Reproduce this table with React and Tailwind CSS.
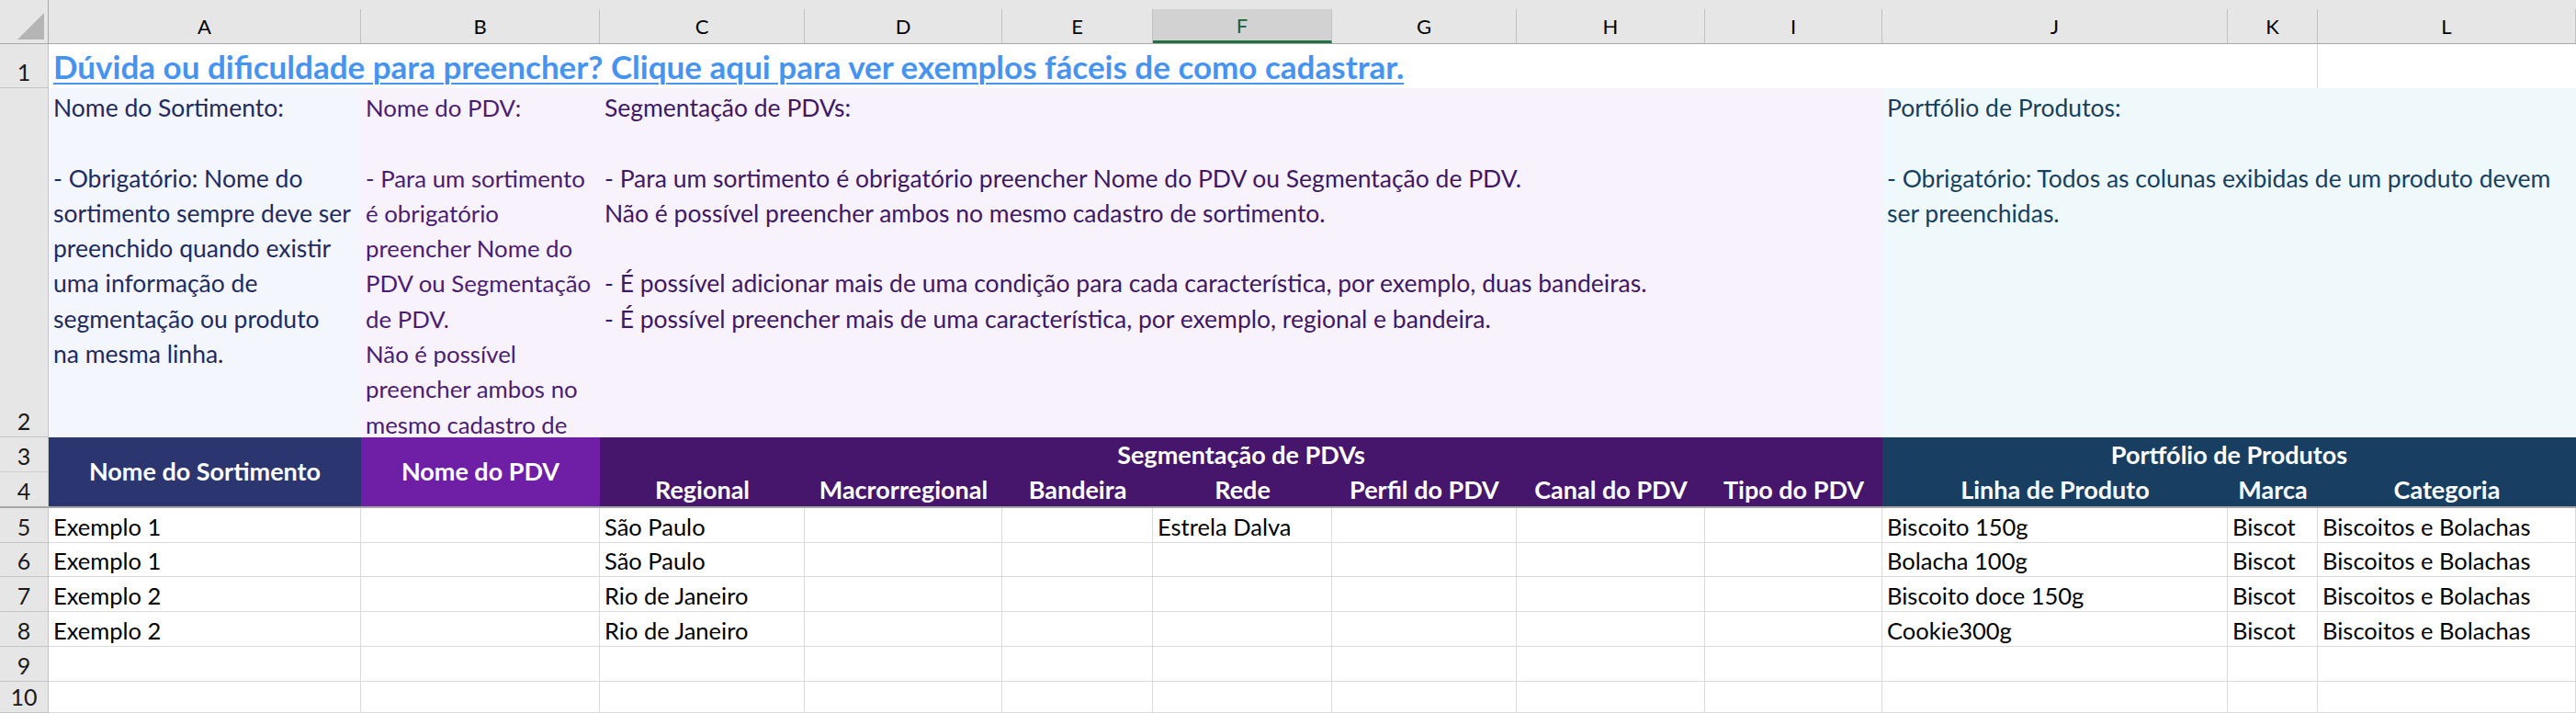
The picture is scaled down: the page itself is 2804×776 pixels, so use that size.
import React from 'react'

const columns = [
  { key: 'A' }, { key: 'B' }, { key: 'C' }, { key: 'D' }, { key: 'E' }, { key: 'F', selected: true },
  { key: 'G' }, { key: 'H' }, { key: 'I' }, { key: 'J' }, { key: 'K' }, { key: 'L' }
]

const segmentFields = ['Regional', 'Macrorregional', 'Bandeira', 'Rede', 'Perfil do PDV', 'Canal do PDV', 'Tipo do PDV']
const productFields = ['Linha de Produto', 'Marca', 'Categoria']

// one entry per data row, keyed by column letter
const rows = [
  { n: 5, A: 'Exemplo 1', C: 'São Paulo', F: 'Estrela Dalva', J: 'Biscoito 150g', K: 'Biscot', L: 'Biscoitos e Bolachas' },
  { n: 6, A: 'Exemplo 1', C: 'São Paulo', J: 'Bolacha 100g', K: 'Biscot', L: 'Biscoitos e Bolachas' },
  { n: 7, A: 'Exemplo 2', C: 'Rio de Janeiro', J: 'Biscoito doce 150g', K: 'Biscot', L: 'Biscoitos e Bolachas' },
  { n: 8, A: 'Exemplo 2', C: 'Rio de Janeiro', J: 'Cookie300g', K: 'Biscot', L: 'Biscoitos e Bolachas' },
  { n: 9 },
  { n: 10 }
]

const notesA = [
  'Nome do Sortimento:', '', '- Obrigatório: Nome do', 'sortimento sempre deve ser', 'preenchido quando existir',
  'uma informação de', 'segmentação ou produto', 'na mesma linha.'
]
const notesB = [
  'Nome do PDV:', '', '- Para um sortimento', 'é obrigatório', 'preencher Nome do', 'PDV ou Segmentação',
  'de PDV.', 'Não é possível', 'preencher ambos no', 'mesmo cadastro de'
]
const notesC = [
  'Segmentação de PDVs:', '',
  '- Para um sortimento é obrigatório preencher Nome do PDV ou Segmentação de PDV.',
  'Não é possível preencher ambos no mesmo cadastro de sortimento.', '',
  '- É possível adicionar mais de uma condição para cada característica, por exemplo, duas bandeiras.',
  '- É possível preencher mais de uma característica, por exemplo, regional e bandeira.'
]
const notesJ = [
  'Portfólio de Produtos:', '', '- Obrigatório: Todos as colunas exibidas de um produto devem', 'ser preenchidas.'
]

function RowNumber({ n, className = '' }) {
  return (
    <div className={`bg-[#e6e6e6] border-r border-b border-[#c4c4c4] flex items-end justify-center leading-[34px] text-[25px] text-[#1a1a1a] ${className}`}>
      {n}
    </div>
  )
}

function Notes({ lines, className }) {
  return (
    <div className={`overflow-hidden pt-[2px] pl-[5px] leading-[38.3px] ${className}`}>
      {lines.map((line, i) => (
        <div key={i} className="whitespace-nowrap h-[38.3px]">{line}</div>
      ))}
    </div>
  )
}

export default function App() {
  return (
    <div className="w-[2804px] h-[776px] overflow-hidden bg-white font-[family-name:Lato,sans-serif] text-black">
      <div className="grid grid-cols-[53px_340px_260px_223px_215px_164px_195px_201px_205px_193px_376px_98px_281px] grid-rows-[48px_48px_380px_38px_39px_38px_37px_38px_38px_38px_34px] h-full">
        {/* column letters */}
        <div className="bg-[#e6e6e6] border-r border-b border-[#a8a8a8] flex items-end justify-end pr-[4px] pb-[4px]">
          <svg width="29" height="29" viewBox="0 0 29 29">
            <polygon points="29,0 29,29 0,29" fill="#b5b5b5" />
          </svg>
        </div>
        {columns.map((col) => (
          <div key={col.key} className="bg-[#e6e6e6] border-b border-[#a8a8a8] flex items-end">
            {col.selected ? (
              <div className="h-[37px] w-full bg-[#d2d2d2] border-r border-b-[3px] border-r-[#c2c2c2] border-b-[#217346] flex items-center justify-center text-[22px] text-[#1d5c37]">
                {col.key}
              </div>
            ) : (
              <div className="h-[37px] w-full border-r border-[#c2c2c2] flex items-center justify-center text-[22px] text-black">
                {col.key}
              </div>
            )}
          </div>
        ))}

        {/* row 1 */}
        <RowNumber n={1} />
        <div className="col-span-10 flex items-center pl-[5px] whitespace-nowrap">
          <span className="text-[35px] font-bold text-[#4794f0] underline decoration-2 underline-offset-[4px]">
            Dúvida ou dificuldade para preencher? Clique aqui para ver exemplos fáceis de como cadastrar.
          </span>
        </div>
        <div className="border-r border-[#d9d9d9]" />
        <div />

        {/* row 2 */}
        <RowNumber n={2} />
        <Notes lines={notesA} className="text-[26.5px] bg-[#f3f6fd] text-[#1f2b5e]" />
        <Notes lines={notesB} className="text-[25.8px] bg-[#f8f2fd] text-[#4a1c72]" />
        <Notes lines={notesC} className="col-span-7 text-[26.5px] bg-[#f8f2fd] text-[#3f1863]" />
        <Notes lines={notesJ} className="col-span-3 text-[26.5px] bg-[#eff9fb] text-[#173f5e]" />

        {/* rows 3 and 4: headers */}
        <RowNumber n={3} className="border-b-[#cfcfcf]" />
        <div className="row-span-2 bg-[#2b3670] border-b-2 border-[#a6a6a6] flex items-center justify-center text-white font-bold text-[27px]">
          Nome do Sortimento
        </div>
        <div className="row-span-2 bg-[#6f1fa6] border-b-2 border-[#a6a6a6] flex items-center justify-center text-white font-bold text-[27px]">
          Nome do PDV
        </div>
        <div className="col-span-7 bg-[#45166b] flex items-center justify-center text-white font-bold text-[27px]">
          Segmentação de PDVs
        </div>
        <div className="col-span-3 bg-[#183f61] flex items-center justify-center text-white font-bold text-[27px]">
          Portfólio de Produtos
        </div>

        <div className="bg-[#e6e6e6] border-r border-[#c4c4c4] border-b-2 border-b-[#a6a6a6] flex items-end justify-center leading-[34px] text-[25px] text-[#1a1a1a]">
          4
        </div>
        {segmentFields.map((f) => (
          <div key={f} className="bg-[#45166b] border-b-2 border-[#a6a6a6] flex items-end justify-center pb-[1px] leading-[34px] text-white font-bold text-[27px] whitespace-nowrap">
            {f}
          </div>
        ))}
        {productFields.map((f) => (
          <div key={f} className="bg-[#183f61] border-b-2 border-[#a6a6a6] flex items-end justify-center pb-[1px] leading-[34px] text-white font-bold text-[27px] whitespace-nowrap">
            {f}
          </div>
        ))}

        {/* data rows */}
        {rows.map((row) => (
          <React.Fragment key={row.n}>
            <RowNumber n={row.n} />
            {columns.map((col) => (
              <div
                key={col.key}
                className="border-r border-b border-[#dadada] flex items-end pl-[5px] leading-[34px] text-[25.5px] whitespace-nowrap overflow-hidden"
              >
                {row[col.key] || ''}
              </div>
            ))}
          </React.Fragment>
        ))}
      </div>
    </div>
  )
}
